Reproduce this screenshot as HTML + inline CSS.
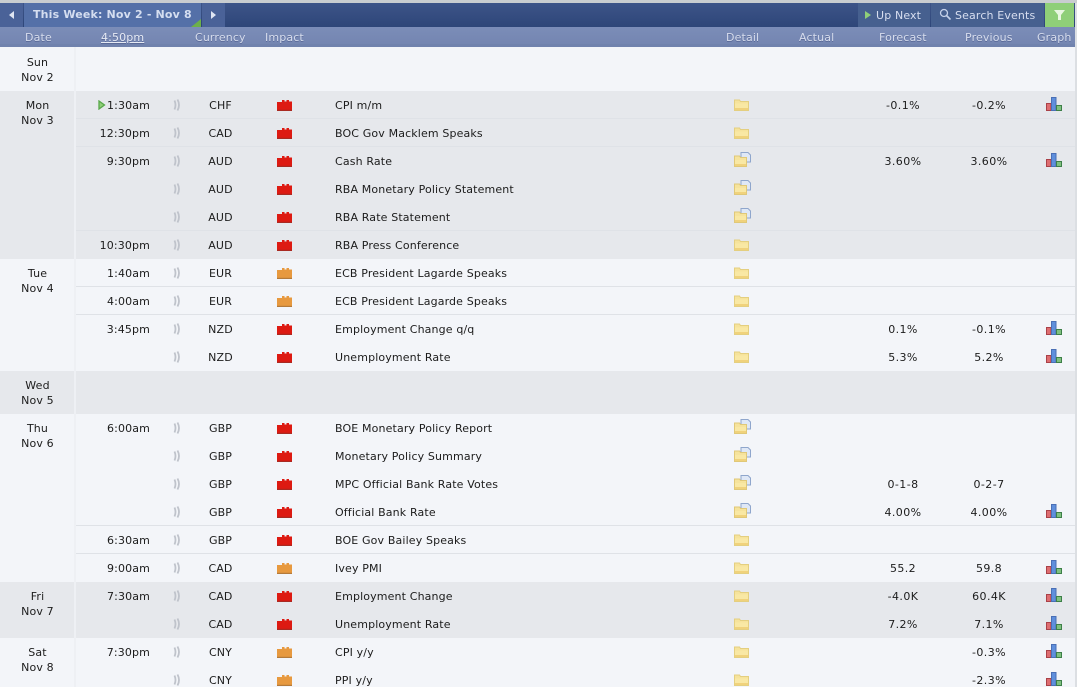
<!DOCTYPE html>
<html><head><meta charset="utf-8">
<style>
html,body{margin:0;padding:0;background:#f3f5f9}
#w{position:relative;width:1077px;height:687px;overflow:hidden;background:#f3f5f9;font:11px/14px "DejaVu Sans",sans-serif;letter-spacing:.14px;color:#1c1c1c}
#w div,#w span,#w svg{position:absolute}
.band{left:0;width:1077px;background:#e6e8ec}
.vl{left:74px;width:2px;background:#eef0f4}
.ln{left:76px;width:1001px;height:1px;background:#dfe2e7}
.d{left:0;width:75px;text-align:center;line-height:15px}
.r{left:0;width:1077px;height:14px}
.t{left:80px;top:1px;width:70px;text-align:right;white-space:nowrap}
.c{left:195px;top:1px;width:51px;text-align:center}
.e{left:335px;top:1px;white-space:nowrap}
.f{left:860px;top:1px;width:86px;text-align:center;letter-spacing:.4px}
.p{left:946px;top:1px;width:86px;text-align:center;letter-spacing:.4px}
.h{top:30px;color:#d6dcec;line-height:14px;white-space:nowrap;text-shadow:0 1px 0 #5a6a98}
.tb{color:#d8dff0;white-space:nowrap}
</style></head><body>
<div id="w">
<svg width="0" height="0" style="left:0;top:0"><defs>
<symbol id="s" viewBox="0 0 10 14"><path d="M2.500 2.500q2 4.500 0 9M5.500 1.500q3 5.500 0 11" fill="none" stroke="#bfc3cb" stroke-width="1.800"/></symbol>
<symbol id="red" viewBox="0 0 15 12"><path d="M0 12V3h5V1h2.500v1.500h2V1H12v1.500h3V12z" fill="#dd1a12"/><path d="M0 10.800h15V12H0z" fill="#a92a22"/></symbol>
<symbol id="org" viewBox="0 0 15 12"><path d="M0 12V3h5V1h2.500v1.500h2V1H12v1.500h3V12z" fill="#e7993f"/><path d="M0 10.800h15V12H0z" fill="#b47a3a"/></symbol>
<symbol id="fo" viewBox="0 0 15 12"><path d="M.5 1h5l1 1.500h8V11.500H.5z" fill="#f6e39c" stroke="#e4cf80"/><path d="M1 4.500h13v6.500H1z" fill="#f9e8a4"/><path d="M1 9h13v2H1z" fill="#f0d27c"/></symbol>
<symbol id="fd" viewBox="0 0 17 15"><path d="M7 .5h7l2.500 2.500V10H7z" fill="#dfe8f6" stroke="#8fa6cc"/><path d="M.5 4h5l1 1.500h6V14.500H.5z" fill="#f6e39c" stroke="#e0c878"/><path d="M1 8h11v6H1z" fill="#f9e8a4"/><path d="M1 12h11v2H1z" fill="#f0d27c"/></symbol>
<symbol id="g" viewBox="0 0 16 14"><path d="M.5 6.500h4.500v7H.5z" fill="#de6d70" stroke="#a94148"/><path d="M5.500 .5h4.500v13H5.500z" fill="#5f8fdc" stroke="#4a6fb5"/><path d="M10.500 8.500h5v5h-5z" fill="#7fc07f" stroke="#3d7f48"/></symbol>
</defs></svg>

<!-- top -->
<div style="left:0;top:0;width:1077px;height:3px;background:#c9cdd0"></div>
<div style="left:0;top:3px;width:1075px;height:24px;background:linear-gradient(#3d5488,#2e4679)"></div>
<div style="left:0;top:3px;width:23px;height:24px;background:#4a6298"></div>
<div style="left:24px;top:3px;width:177px;height:24px;background:#5470a8"></div>
<div style="left:202px;top:3px;width:23px;height:24px;background:#4a6298"></div>
<svg style="left:9px;top:11px" width="6" height="8"><path d="M5 0v8L0 4z" fill="#dfe5f2"/></svg>
<svg style="left:211px;top:11px" width="6" height="8"><path d="M0 0v8l5-4z" fill="#dfe5f2"/></svg>
<div class="tb" style="left:33px;top:8px;font-weight:bold;color:#d5def0;letter-spacing:.17px">This Week: Nov 2 - Nov 8</div>
<svg style="left:191px;top:19px" width="10" height="8"><path d="M10 0v8H0z" fill="#6cb04a"/></svg>
<div style="left:858px;top:3px;width:72px;height:24px;background:#46608f"></div>
<div style="left:931px;top:3px;width:113px;height:24px;background:#46608f"></div>
<div style="left:1045px;top:3px;width:29px;height:24px;background:#8fcf78"></div>
<svg style="left:865px;top:11px" width="7" height="8"><path d="M0 0v8l6-4z" fill="#8fcf78"/></svg>
<div class="tb" style="left:876px;top:9px">Up Next</div>
<svg style="left:939px;top:8px" width="13" height="13"><circle cx="5" cy="5" r="3.500" fill="none" stroke="#c6d2ea" stroke-width="1.300"/><path d="M7.500 7.500l4 4" stroke="#c6d2ea" stroke-width="1.600"/></svg>
<div class="tb" style="left:955px;top:9px">Search Events</div>
<svg style="left:1054px;top:10px" width="11" height="10"><path d="M0 0h11L7 5v5H4V5z" fill="#e8f6e0"/></svg>

<!-- column head -->
<div style="left:0;top:27px;width:1075px;height:20px;background:linear-gradient(#7b8db8,#7384b0)"></div>
<div style="left:0;top:44px;width:1075px;height:3px;background:#7082ad"></div>
<div class="h" style="left:25px;top:31px">Date</div>
<div class="h" style="left:101px;top:31px;text-decoration:underline;color:#e6eaf4">4:50pm</div>
<div class="h" style="left:195px;top:31px">Currency</div>
<div class="h" style="left:265px;top:31px">Impact</div>
<div class="h" style="left:726px;top:31px">Detail</div>
<div class="h" style="left:799px;top:31px">Actual</div>
<div class="h" style="left:879px;top:31px">Forecast</div>
<div class="h" style="left:965px;top:31px">Previous</div>
<div class="h" style="left:1037px;top:31px">Graph</div>

<!-- bands -->
<div class="band" style="top:91px;height:168px"></div>
<div class="band" style="top:371px;height:43px"></div>
<div class="band" style="top:582px;height:56px"></div>
<div class="vl" style="top:47px;height:640px"></div>

<!-- lines -->
<div class="ln" style="top:118px"></div>
<div class="ln" style="top:146px"></div>
<div class="ln" style="top:230px"></div>
<div class="ln" style="top:286px"></div>
<div class="ln" style="top:314px"></div>
<div class="ln" style="top:525px"></div>
<div class="ln" style="top:553px"></div>

<!-- days -->
<div class="d" style="top:55px">Sun<br>Nov 2</div>
<div class="d" style="top:98px">Mon<br>Nov 3</div>
<div class="d" style="top:266px">Tue<br>Nov 4</div>
<div class="d" style="top:378px">Wed<br>Nov 5</div>
<div class="d" style="top:421px">Thu<br>Nov 6</div>
<div class="d" style="top:589px">Fri<br>Nov 7</div>
<div class="d" style="top:645px">Sat<br>Nov 8</div>

<svg style="left:98px;top:100px" width="8" height="10"><path d="M1 1v8l5.500-4z" fill="#8fcf78" stroke="#58a84a" stroke-width="1.300"/></svg>

<!-- rows -->
<div class="r" style="top:98px"><span class="t">1:30am</span><svg style="left:172px;top:0" width="10" height="14"><use href="#s"/></svg><span class="c">CHF</span><svg style="left:277px;top:1px" width="15" height="12"><use href="#red"/></svg><span class="e">CPI m/m</span><svg style="left:734px;top:1px" width="15" height="12"><use href="#fo"/></svg><span class="f">-0.1%</span><span class="p">-0.2%</span><svg style="left:1046px;top:-1px" width="16" height="14"><use href="#g"/></svg></div>

<div class="r" style="top:126px"><span class="t">12:30pm</span><svg style="left:172px;top:0" width="10" height="14"><use href="#s"/></svg><span class="c">CAD</span><svg style="left:277px;top:1px" width="15" height="12"><use href="#red"/></svg><span class="e">BOC Gov Macklem Speaks</span><svg style="left:734px;top:1px" width="15" height="12"><use href="#fo"/></svg></div>

<div class="r" style="top:154px"><span class="t">9:30pm</span><svg style="left:172px;top:0" width="10" height="14"><use href="#s"/></svg><span class="c">AUD</span><svg style="left:277px;top:1px" width="15" height="12"><use href="#red"/></svg><span class="e">Cash Rate</span><svg style="left:734px;top:-2px" width="17" height="15"><use href="#fd"/></svg><span class="f">3.60%</span><span class="p">3.60%</span><svg style="left:1046px;top:-1px" width="16" height="14"><use href="#g"/></svg></div>

<div class="r" style="top:182px"><svg style="left:172px;top:0" width="10" height="14"><use href="#s"/></svg><span class="c">AUD</span><svg style="left:277px;top:1px" width="15" height="12"><use href="#red"/></svg><span class="e">RBA Monetary Policy Statement</span><svg style="left:734px;top:-2px" width="17" height="15"><use href="#fd"/></svg></div>

<div class="r" style="top:210px"><svg style="left:172px;top:0" width="10" height="14"><use href="#s"/></svg><span class="c">AUD</span><svg style="left:277px;top:1px" width="15" height="12"><use href="#red"/></svg><span class="e">RBA Rate Statement</span><svg style="left:734px;top:-2px" width="17" height="15"><use href="#fd"/></svg></div>

<div class="r" style="top:238px"><span class="t">10:30pm</span><svg style="left:172px;top:0" width="10" height="14"><use href="#s"/></svg><span class="c">AUD</span><svg style="left:277px;top:1px" width="15" height="12"><use href="#red"/></svg><span class="e">RBA Press Conference</span><svg style="left:734px;top:1px" width="15" height="12"><use href="#fo"/></svg></div>

<div class="r" style="top:266px"><span class="t">1:40am</span><svg style="left:172px;top:0" width="10" height="14"><use href="#s"/></svg><span class="c">EUR</span><svg style="left:277px;top:1px" width="15" height="12"><use href="#org"/></svg><span class="e">ECB President Lagarde Speaks</span><svg style="left:734px;top:1px" width="15" height="12"><use href="#fo"/></svg></div>

<div class="r" style="top:294px"><span class="t">4:00am</span><svg style="left:172px;top:0" width="10" height="14"><use href="#s"/></svg><span class="c">EUR</span><svg style="left:277px;top:1px" width="15" height="12"><use href="#org"/></svg><span class="e">ECB President Lagarde Speaks</span><svg style="left:734px;top:1px" width="15" height="12"><use href="#fo"/></svg></div>

<div class="r" style="top:322px"><span class="t">3:45pm</span><svg style="left:172px;top:0" width="10" height="14"><use href="#s"/></svg><span class="c">NZD</span><svg style="left:277px;top:1px" width="15" height="12"><use href="#red"/></svg><span class="e">Employment Change q/q</span><svg style="left:734px;top:1px" width="15" height="12"><use href="#fo"/></svg><span class="f">0.1%</span><span class="p">-0.1%</span><svg style="left:1046px;top:-1px" width="16" height="14"><use href="#g"/></svg></div>

<div class="r" style="top:350px"><svg style="left:172px;top:0" width="10" height="14"><use href="#s"/></svg><span class="c">NZD</span><svg style="left:277px;top:1px" width="15" height="12"><use href="#red"/></svg><span class="e">Unemployment Rate</span><svg style="left:734px;top:1px" width="15" height="12"><use href="#fo"/></svg><span class="f">5.3%</span><span class="p">5.2%</span><svg style="left:1046px;top:-1px" width="16" height="14"><use href="#g"/></svg></div>

<div class="r" style="top:421px"><span class="t">6:00am</span><svg style="left:172px;top:0" width="10" height="14"><use href="#s"/></svg><span class="c">GBP</span><svg style="left:277px;top:1px" width="15" height="12"><use href="#red"/></svg><span class="e">BOE Monetary Policy Report</span><svg style="left:734px;top:-2px" width="17" height="15"><use href="#fd"/></svg></div>

<div class="r" style="top:449px"><svg style="left:172px;top:0" width="10" height="14"><use href="#s"/></svg><span class="c">GBP</span><svg style="left:277px;top:1px" width="15" height="12"><use href="#red"/></svg><span class="e">Monetary Policy Summary</span><svg style="left:734px;top:-2px" width="17" height="15"><use href="#fd"/></svg></div>

<div class="r" style="top:477px"><svg style="left:172px;top:0" width="10" height="14"><use href="#s"/></svg><span class="c">GBP</span><svg style="left:277px;top:1px" width="15" height="12"><use href="#red"/></svg><span class="e">MPC Official Bank Rate Votes</span><svg style="left:734px;top:-2px" width="17" height="15"><use href="#fd"/></svg><span class="f">0-1-8</span><span class="p">0-2-7</span></div>

<div class="r" style="top:505px"><svg style="left:172px;top:0" width="10" height="14"><use href="#s"/></svg><span class="c">GBP</span><svg style="left:277px;top:1px" width="15" height="12"><use href="#red"/></svg><span class="e">Official Bank Rate</span><svg style="left:734px;top:-2px" width="17" height="15"><use href="#fd"/></svg><span class="f">4.00%</span><span class="p">4.00%</span><svg style="left:1046px;top:-1px" width="16" height="14"><use href="#g"/></svg></div>

<div class="r" style="top:533px"><span class="t">6:30am</span><svg style="left:172px;top:0" width="10" height="14"><use href="#s"/></svg><span class="c">GBP</span><svg style="left:277px;top:1px" width="15" height="12"><use href="#red"/></svg><span class="e">BOE Gov Bailey Speaks</span><svg style="left:734px;top:1px" width="15" height="12"><use href="#fo"/></svg></div>

<div class="r" style="top:561px"><span class="t">9:00am</span><svg style="left:172px;top:0" width="10" height="14"><use href="#s"/></svg><span class="c">CAD</span><svg style="left:277px;top:1px" width="15" height="12"><use href="#org"/></svg><span class="e">Ivey PMI</span><svg style="left:734px;top:1px" width="15" height="12"><use href="#fo"/></svg><span class="f">55.2</span><span class="p">59.8</span><svg style="left:1046px;top:-1px" width="16" height="14"><use href="#g"/></svg></div>

<div class="r" style="top:589px"><span class="t">7:30am</span><svg style="left:172px;top:0" width="10" height="14"><use href="#s"/></svg><span class="c">CAD</span><svg style="left:277px;top:1px" width="15" height="12"><use href="#red"/></svg><span class="e">Employment Change</span><svg style="left:734px;top:1px" width="15" height="12"><use href="#fo"/></svg><span class="f">-4.0K</span><span class="p">60.4K</span><svg style="left:1046px;top:-1px" width="16" height="14"><use href="#g"/></svg></div>

<div class="r" style="top:617px"><svg style="left:172px;top:0" width="10" height="14"><use href="#s"/></svg><span class="c">CAD</span><svg style="left:277px;top:1px" width="15" height="12"><use href="#red"/></svg><span class="e">Unemployment Rate</span><svg style="left:734px;top:1px" width="15" height="12"><use href="#fo"/></svg><span class="f">7.2%</span><span class="p">7.1%</span><svg style="left:1046px;top:-1px" width="16" height="14"><use href="#g"/></svg></div>

<div class="r" style="top:645px"><span class="t">7:30pm</span><svg style="left:172px;top:0" width="10" height="14"><use href="#s"/></svg><span class="c">CNY</span><svg style="left:277px;top:1px" width="15" height="12"><use href="#org"/></svg><span class="e">CPI y/y</span><svg style="left:734px;top:1px" width="15" height="12"><use href="#fo"/></svg><span class="p">-0.3%</span><svg style="left:1046px;top:-1px" width="16" height="14"><use href="#g"/></svg></div>

<div class="r" style="top:673px"><svg style="left:172px;top:0" width="10" height="14"><use href="#s"/></svg><span class="c">CNY</span><svg style="left:277px;top:1px" width="15" height="12"><use href="#org"/></svg><span class="e">PPI y/y</span><svg style="left:734px;top:1px" width="15" height="12"><use href="#fo"/></svg><span class="p">-2.3%</span><svg style="left:1046px;top:-1px" width="16" height="14"><use href="#g"/></svg></div>

<!-- right edge strip -->
<div style="left:1075px;top:3px;width:2px;height:684px;background:#dcdfe3"></div>
</div>
</body></html>
